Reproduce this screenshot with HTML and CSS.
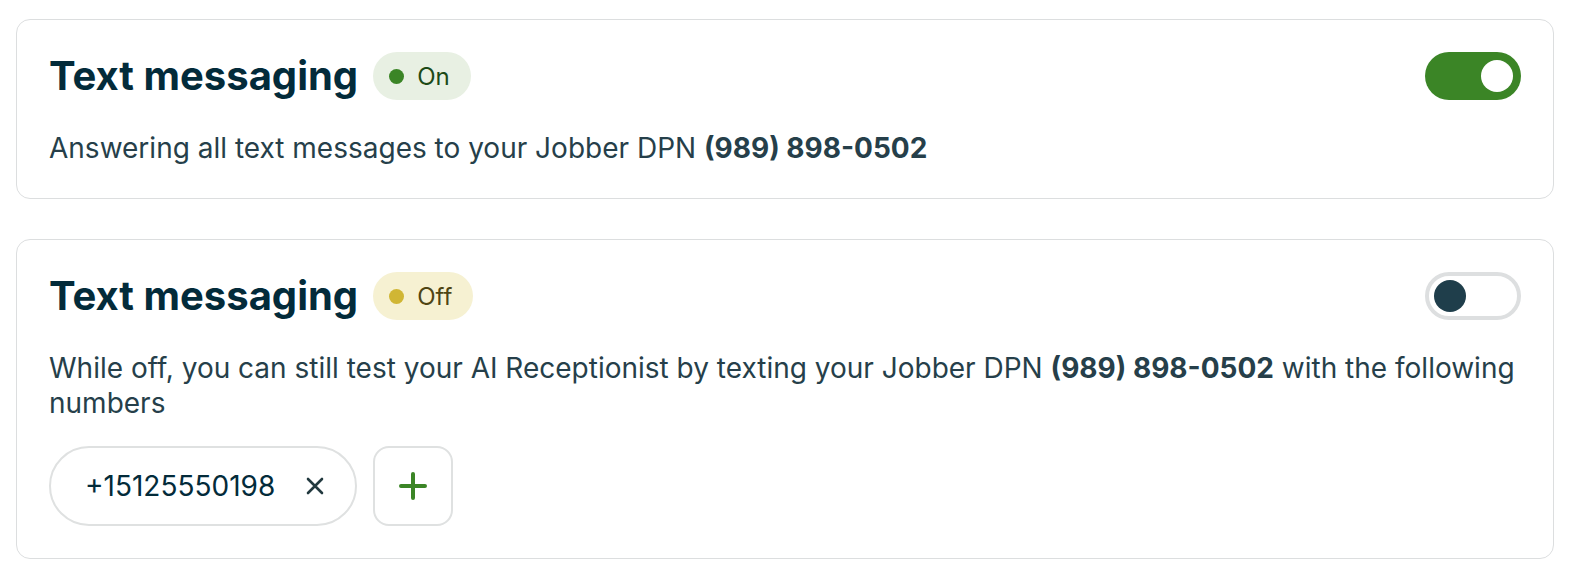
FILE: index.html
```html
<!DOCTYPE html>
<html lang="en">
<head>
<meta charset="utf-8">
<title>Text messaging</title>
<link rel="stylesheet" href="styles.css">
</head>
<body>
<main class="page">
  <section class="card">
    <div class="card-header">
      <div class="title-group">
        <h2 class="title">Text messaging</h2>
        <span class="status status-on"><span class="status-dot"></span>On</span>
      </div>
      <button class="toggle toggle-on" aria-label="Text messaging on"><span class="knob"></span></button>
    </div>
    <p class="desc">Answering all text messages to your Jobber DPN <strong>(989) 898-0502</strong></p>
  </section>

  <section class="card">
    <div class="card-header">
      <div class="title-group">
        <h2 class="title">Text messaging</h2>
        <span class="status status-off"><span class="status-dot"></span>Off</span>
      </div>
      <button class="toggle toggle-off" aria-label="Text messaging off"><span class="knob"></span></button>
    </div>
    <p class="desc">While off, you can still test your AI Receptionist by texting your Jobber DPN <strong>(989) 898-0502</strong> with the following numbers</p>
    <div class="numbers">
      <span class="chip">
        <span class="chip-text">+15125550198</span>
        <button class="chip-remove" aria-label="Remove">
          <svg width="18" height="18" viewBox="0 0 18 18"><path d="M2 2 L16 16 M16 2 L2 16" stroke="#22393f" stroke-width="2.6" stroke-linecap="round"/></svg>
        </button>
      </span>
      <button class="add-btn" aria-label="Add number">
        <svg width="28" height="28" viewBox="0 0 28 28"><path d="M14 2 V26 M2 14 H26" stroke="#3b8526" stroke-width="4" stroke-linecap="round"/></svg>
      </button>
    </div>
  </section>
</main>
</body>
</html>
```

FILE: styles.css
```css
* { box-sizing: border-box; }

html, body {
  margin: 0;
  padding: 0;
  background: #ffffff;
}

body {
  font-family: "Inter", "Noto Sans", sans-serif;
  color: #263f4a;
}

.page {
  display: flex;
  flex-direction: column;
  gap: 40px;
  padding: 19px 24px 0 16px;
}

.card {
  border: 1px solid #dcdedf;
  border-radius: 14px;
  padding: 32px;
  background: #fff;
}

.card-header {
  display: flex;
  align-items: center;
  justify-content: space-between;
  height: 48px;
}

.title-group {
  display: flex;
  align-items: center;
  gap: 15px;
}

.title {
  margin: 0;
  font-size: 40px;
  line-height: 48px;
  font-weight: 700;
  color: #032b3a;
  letter-spacing: 0;
}

.status {
  display: inline-flex;
  align-items: center;
  gap: 13px;
  height: 48px;
  padding: 0 21px 0 16px;
  border-radius: 24px;
  font-size: 24px;
  font-weight: 400;
}

.status-dot {
  width: 15px;
  height: 15px;
  border-radius: 50%;
}

.status-on { background: #e8f0e3; color: #1c4a16; }
.status-on .status-dot { background: #3b8526; }

.status-off { background: #f6f1d2; color: #4f4513; }
.status-off .status-dot { background: #d0b634; }

.toggle {
  width: 96px;
  height: 48px;
  border-radius: 24px;
  padding: 0;
  display: flex;
  align-items: center;
  cursor: pointer;
}

.toggle-on {
  background: #3b8526;
  border: none;
  justify-content: flex-end;
  padding-right: 8px;
}

.toggle-on .knob { background: #ffffff; }

.toggle-off {
  background: #ffffff;
  border: 4px solid #dddfe0;
  justify-content: flex-start;
  padding-left: 5px;
}

.toggle-off .knob { background: #1f3e4b; }

.knob {
  width: 32px;
  height: 32px;
  border-radius: 50%;
}

.desc {
  margin: 31px 0 0;
  font-size: 28px;
  line-height: 35px;
  font-weight: 400;
  color: #263f4a;
}

.desc strong { font-weight: 700; color: #263f4a; }

.numbers {
  display: flex;
  align-items: center;
  gap: 16px;
  margin-top: 25px;
}

.chip {
  display: inline-flex;
  align-items: center;
  gap: 24px;
  height: 80px;
  padding: 0 24px 0 34px;
  border: 2px solid #dfe1e1;
  border-radius: 40px;
  font-size: 28px;
  color: #032b3a;
}

.chip-remove {
  width: 32px;
  height: 32px;
  padding: 0;
  border: none;
  background: transparent;
  display: flex;
  align-items: center;
  justify-content: center;
}

.add-btn {
  width: 80px;
  height: 80px;
  padding: 0;
  border: 2px solid #dfe1e1;
  border-radius: 16px;
  background: #fff;
  display: flex;
  align-items: center;
  justify-content: center;
}
```
